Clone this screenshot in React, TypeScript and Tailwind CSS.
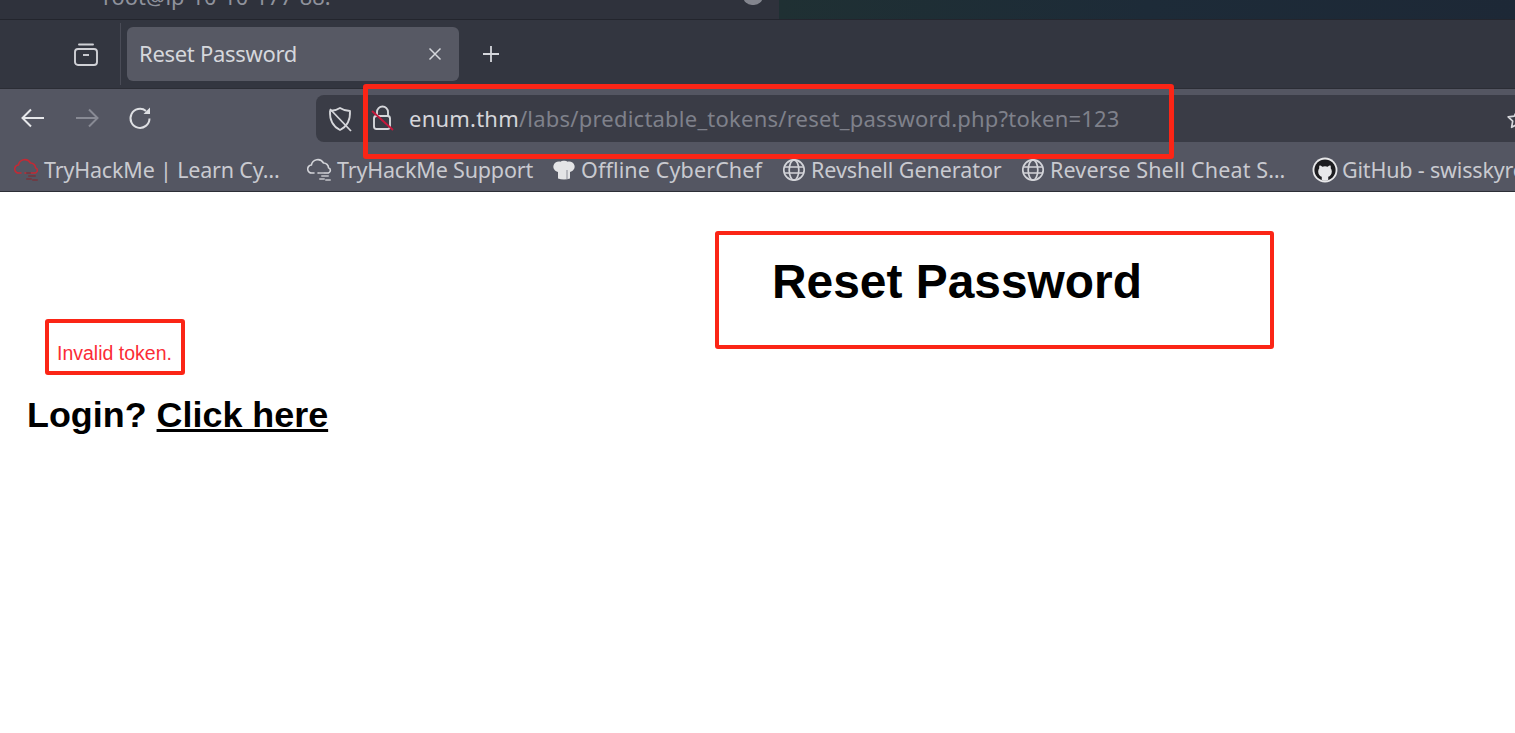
const ui = { fontFamily: '"Noto Sans", sans-serif' };
const page = { fontFamily: '"Liberation Sans", Arial, sans-serif' };

function Globe() {
  return (
    <svg width="24" height="24" viewBox="0 0 24 24" fill="none" stroke="#d3d4d9" strokeWidth="1.7" className="shrink-0">
      <circle cx="12" cy="12" r="10.2" />
      <ellipse cx="12" cy="12" rx="4.8" ry="10.2" />
      <path d="M2 9h20M2 15h20" />
    </svg>
  );
}

function Cloud({ color, sub }: { color: string; sub: string }) {
  return (
    <svg width="26" height="26" viewBox="0 0 26 26" fill="none" className="shrink-0">
      <path d="M7 16H5a4 4 0 0 1-.6-8A6.500 6.500 0 0 1 16.500 6a4.800 4.800 0 0 1 5 4.700A2.800 2.800 0 0 1 21.500 16H11" stroke={color} strokeWidth="1.600" strokeLinecap="round" strokeLinejoin="round" />
      <path d="M13 16h3M15 19h6M13 22h4M19 23h4" stroke={sub} strokeWidth="2" strokeLinecap="round" />
    </svg>
  );
}

function Chef() {
  return (
    <svg width="24" height="24" viewBox="0 0 24 24" className="shrink-0">
      <path d="M6 20.500V14C2.500 13 .8 10 1.500 7.500 2.300 4.500 5.500 2.800 8.500 3.700 10 2.300 14 2.300 15.500 3.700c3-.9 6.200.8 7 3.800.7 2.500-1 5.500-4.500 6.500v6.500c-3.500 1.200-8.500 1.200-12 0z" fill="#e4e4e6" />
      <path d="M15 21V12" stroke="#a9aab0" strokeWidth="1.500" />
    </svg>
  );
}

function GitHubMark() {
  return (
    <svg width="26" height="26" viewBox="0 0 24 24" className="shrink-0">
      <circle cx="12" cy="12" r="11.500" fill="#e8e8ea" />
      <circle cx="12" cy="12" r="9.800" fill="#1d1d20" />
      <path d="M9 21.500v-3.200c-1.700-.7-3.300-2.400-3.300-5 0-1.100.4-2.100 1-2.900-.2-.8-.1-1.800.2-2.500 1 0 1.900.5 2.600 1.100a8 8 0 0 1 5 0c.7-.6 1.600-1.100 2.600-1.100.3.7.4 1.700.2 2.500.6.8 1 1.800 1 2.900 0 2.600-1.600 4.300-3.300 5v3.200c-2 .7-4 .7-6 0z" fill="#e8e8ea" />
    </svg>
  );
}

function Bookmark({ icon, text, gap, width, tracking }: { icon: React.ReactNode; text: string; gap: string; width: string; tracking: string }) {
  return (
    <div className={`flex shrink-0 items-center ${gap} ${width}`}>
      {icon}
      <span className={`whitespace-nowrap text-[21.500px] leading-none text-[#c9cad0] ${tracking}`}>{text}</span>
    </div>
  );
}

export default function App() {
  return (
    <div className="h-[733px] w-[1515px] overflow-hidden bg-white" style={ui}>
      <div className="relative">
        {/* terminal window behind the browser */}
        <div className="flex h-[20px] overflow-hidden border-b border-[#23252d]">
          <div className="flex w-[779px] shrink-0 justify-between bg-[#2f323c] pr-[16px] pl-[103px]">
            <span className="-mt-[17px] whitespace-nowrap text-[21.800px] leading-[28px] text-[#8f929c]">root@ip-10-10-177-88:</span>
            <span className="-mt-[13px] h-[18px] w-[20px] rounded-full bg-[#83858e]" />
          </div>
          <div className="flex-1 bg-gradient-to-r from-[#1f3033] via-[#1d2b38] to-[#1d2836]" />
        </div>

        {/* tab bar */}
        <div className="flex h-[68px] items-center bg-[#333640]">
          <div className="flex h-[62px] w-[121px] shrink-0 items-center justify-end border-r border-[#4a4c57] pr-[22px]">
            <svg width="24" height="26" viewBox="0 0 24 26" fill="none" stroke="#d0d1d6" strokeWidth="1.900">
              <path d="M5 3.500h14" strokeLinecap="round" />
              <rect x="1" y="8" width="22" height="16" rx="3" />
              <path d="M9 14h6" />
            </svg>
          </div>
          <div className="ml-[6px] flex h-[54px] w-[332px] shrink-0 items-center justify-between rounded-[6px] bg-[#575964] pr-[16px] pl-[12px] text-[#d5d7dc]">
            <span className="pb-[2px] text-[22px] leading-none tracking-[-0.3px]">Reset Password</span>
            <svg width="16" height="16" viewBox="0 0 16 16" stroke="#d5d7dc" strokeWidth="1.500"><path d="M2.500 2.500l11 11M13.500 2.500l-11 11" /></svg>
          </div>
          <svg className="ml-[22px]" width="20" height="20" viewBox="0 0 20 20" stroke="#d5d7dc" strokeWidth="1.800"><path d="M10 2v16M2 10h16" /></svg>
        </div>

        {/* navigation bar */}
        <div className="flex h-[54px] items-end border-t border-[#2b2d35] bg-[#545662]">
          <div className="flex h-[53px] w-[316px] shrink-0 items-center gap-[26px] pt-[5px] pl-[19px]">
            <svg width="28" height="26" viewBox="0 0 28 26" fill="none" stroke="#e6e7ea" strokeWidth="2"><path d="M25 13H4M12 4.500L3.500 13l8.500 8.500" /></svg>
            <svg width="28" height="26" viewBox="0 0 28 26" fill="none" stroke="#888a94" strokeWidth="2"><path d="M3 13h21M16 4.500l8.500 8.500-8.500 8.500" /></svg>
            <svg width="26" height="26" viewBox="0 0 26 26" fill="none" stroke="#dfe0e4" strokeWidth="2"><path d="M22.500 13.500A9.500 9.500 0 1 1 19 6" /><path d="M23 2.500V9h-6.500z" fill="#dfe0e4" stroke="none" /></svg>
          </div>
          <div className="flex h-[47px] flex-1 items-center overflow-hidden rounded-l-[8px] bg-[#3a3c46]">
            <svg className="ml-[11px] shrink-0" width="26" height="26" viewBox="0 0 26 26" fill="none" stroke="#d6d7db" strokeWidth="1.800">
              <path d="M13 2c3 2 6 3 10 3 .4 8-2 15-10 19C5 20 2.600 13 3 5c4 0 7-1 10-3z" strokeLinejoin="round" />
              <path d="M3 3l21 22" />
            </svg>
            <svg className="mb-[2px] ml-[16px] shrink-0" width="28" height="28" viewBox="0 0 28 28" fill="none" stroke="#d6d7db" strokeWidth="1.900">
              <path d="M8 12V8a5.500 5.500 0 0 1 11 0v4" />
              <rect x="5" y="12" width="16" height="13" rx="2.500" />
              <path d="M3 7l21 19" stroke="#c8183c" />
            </svg>
            <div className="ml-[12px] whitespace-nowrap pb-[2px] text-[22px] leading-none tracking-[0.22px] text-[#7f818b]">
              <span className="text-[#d5d6da]">enum.thm</span>/labs/predictable_tokens/reset_password.php?token=123
            </div>
            <div className="ml-auto -mr-[13px] shrink-0">
              <svg width="22" height="22" viewBox="0 0 22 22" fill="none" stroke="#d6d7db" strokeWidth="1.700"><path d="M11 2.500l2.700 5.600 6.100.8-4.500 4.300 1.100 6.100L11 16.300l-5.400 3 1.100-6.100-4.500-4.300 6.100-.8z" strokeLinejoin="round" /></svg>
            </div>
          </div>
        </div>

        {/* bookmarks */}
        <div className="flex h-[50px] items-center overflow-hidden border-b border-[#2c2e36] bg-[#545662] pt-[6px] pl-[14px]">
          <Bookmark icon={<Cloud color="#c22a35" sub="#6f3b44" />} text="TryHackMe | Learn Cy…" gap="gap-[4px]" width="w-[293px]" tracking="tracking-[-0.17px]" />
          <Bookmark icon={<Cloud color="#d3d4d9" sub="#a8a9b0" />} text="TryHackMe Support" gap="gap-[4px]" width="w-[245px]" tracking="tracking-[-0.17px]" />
          <Bookmark icon={<Chef />} text="Offline CyberChef" gap="gap-[5px]" width="w-[230px]" tracking="tracking-[0.13px]" />
          <Bookmark icon={<Globe />} text="Revshell Generator" gap="gap-[5px]" width="w-[239px]" tracking="tracking-[-0.06px]" />
          <Bookmark icon={<Globe />} text="Reverse Shell Cheat S…" gap="gap-[5px]" width="w-[291px]" tracking="tracking-[0.15px]" />
          <Bookmark icon={<GitHubMark />} text="GitHub - swisskyrepo" gap="gap-[4px]" width="w-[220px]" tracking="tracking-[-0.17px]" />
        </div>

        {/* annotation round the address */}
        <div className="absolute top-[84px] left-[363px] h-[75px] w-[811px] rounded-[3px] border-[5px] border-[#fb2516]" />
      </div>

      {/* page */}
      <div className="flex" style={page}>
        <div className="w-[715px] shrink-0 pt-[127px]">
          <div className="ml-[45px] flex h-[56px] w-[140px] items-end rounded-[3px] border-4 border-[#fb2516] pb-[8px] pl-[8px] text-[19.500px] leading-none text-[#fb2c36]">
            Invalid token.
          </div>
          <div className="mt-[21px] ml-[27px] text-[35.900px] leading-[38px] font-bold text-black">
            Login? <a className="underline" href="#">Click here</a>
          </div>
        </div>
        <div className="mt-[39px] h-[118px] w-[559px] rounded-[3px] border-4 border-[#fb2516] pt-[21px] pl-[53px]">
          <h1 className="text-[47.900px] leading-[52px] font-bold text-black">Reset Password</h1>
        </div>
      </div>
    </div>
  );
}
